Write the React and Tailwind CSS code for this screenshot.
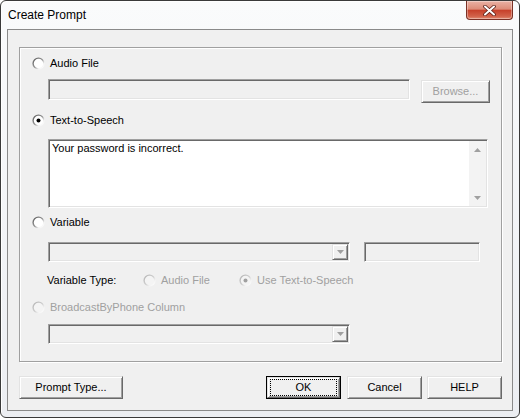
import React from "react";

const sunken =
  "border border-t-[#a0a0a0] border-l-[#a0a0a0] border-r-white border-b-white shadow-[inset_1px_1px_0_#696969,inset_-1px_-1px_0_#e3e3e3]";
const raised =
  "border border-t-[#e3e3e3] border-l-[#e3e3e3] border-r-[#696969] border-b-[#696969] shadow-[inset_1px_1px_0_#ffffff,inset_-1px_-1px_0_#a0a0a0]";

function Radio({ checked, disabled }) {
  const gid = disabled ? "rg-dis" : "rg-en";
  return (
    <svg width="13" height="13" viewBox="0 0 13 13" className="shrink-0 block">
      <defs>
        <linearGradient id={gid} x1="0" y1="0" x2="1" y2="1">
          <stop offset="0" stopColor={disabled ? "#b4b4b4" : "#5c5c5c"} />
          <stop offset="0.5" stopColor={disabled ? "#d0d0d0" : "#9a9a9a"} />
          <stop offset="0.75" stopColor="#f4f4f4" />
          <stop offset="1" stopColor="#ffffff" />
        </linearGradient>
      </defs>
      <circle
        cx="6.5"
        cy="6.5"
        r="5.4"
        fill={disabled ? "#f4f4f4" : "#ffffff"}
        stroke={`url(#${gid})`}
        strokeWidth="1.4"
      />
      {checked && (
        <circle cx="6.5" cy="6.5" r="2" fill={disabled ? "#a0a0a0" : "#000000"} />
      )}
    </svg>
  );
}

function DownArrow({ color = "#a0a0a0" }) {
  return (
    <svg width="7" height="4" viewBox="0 0 7 4" className="block">
      <path d="M0 0 H7 L3.5 4 Z" fill={color} />
    </svg>
  );
}

function UpArrow({ color = "#a0a0a0" }) {
  return (
    <svg width="7" height="4" viewBox="0 0 7 4" className="block">
      <path d="M0 4 H7 L3.5 0 Z" fill={color} />
    </svg>
  );
}

function Combo() {
  return (
    <div className={`w-[302px] h-[20px] bg-[#f0f0f0] p-[1px] flex justify-end ${sunken}`}>
      <div className={`w-[16px] h-full bg-[#f0f0f0] flex items-center justify-center ${raised}`}>
        <DownArrow />
      </div>
    </div>
  );
}

function Button({ children, w = "w-[75px]", extra = "" }) {
  return (
    <div
      className={`${w} h-[23px] bg-[#f0f0f0] flex items-center justify-center ${raised} ${extra}`}
    >
      {children}
    </div>
  );
}

export default function App() {
  return (
    <div className="w-[520px] h-[418px] bg-white">
      <div className="w-[520px] h-[418px] flex flex-col border border-[#3a3a3a] rounded-[6px] bg-gradient-to-b from-[#fafbfc] to-[#eceef2] font-['Liberation_Sans',Arial,sans-serif] text-[11px] text-black overflow-hidden shadow-[inset_1px_1px_0_#ffffff]">
        {/* Title bar */}
        <div className="h-[28px] shrink-0 flex justify-between items-start">
          <div className="pl-[7px] h-[28px] flex items-center text-[12px] leading-none">
            Create Prompt
          </div>
          <div className="mr-[6px] w-[47px] h-[19px] rounded-b-[4px] border border-[#7a3126] border-t-0 bg-[linear-gradient(to_bottom,#eab2a5_0%,#dd8c78_45%,#c7412b_52%,#d2624a_85%,#e28d74_100%)] flex items-center justify-center shadow-[inset_0_0_0_1px_rgba(255,255,255,0.35)]">
            <svg width="13" height="11" viewBox="0 0 13 11" className="block">
              <path d="M2 1.5 L11 9.5 M11 1.5 L2 9.5" stroke="#5a1f17" strokeWidth="3.6" strokeLinecap="round" />
              <path d="M2 1.5 L11 9.5 M11 1.5 L2 9.5" stroke="#ffffff" strokeWidth="2" strokeLinecap="round" />
            </svg>
          </div>
        </div>

        {/* Client area */}
        <div className="mx-[6px] h-[382px] shrink-0 border border-[#8a8a8a] bg-[#f0f0f0] flex flex-col pl-[11px] pt-[17px]">
          {/* Group box */}
          <div className="w-[483px] h-[315px] shrink-0 border border-[#a0a0a0] shadow-[inset_1px_1px_0_#ffffff,1px_1px_0_#ffffff] flex flex-col pl-[12px]">
            {/* Audio File */}
            <div className="mt-[7px] h-[16px] flex items-center gap-[5px]">
              <Radio />
              <span className="leading-none">Audio File</span>
            </div>
            <div className="mt-[8px] ml-[16px] flex items-start">
              <div className={`w-[362px] h-[21px] bg-[#f0f0f0] ${sunken}`} />
              <Button w="w-[69px]" extra="ml-[11px] mt-[1px] text-[#a0a0a0]">
                Browse...
              </Button>
            </div>

            {/* Text-to-Speech */}
            <div className="mt-[9px] h-[16px] flex items-center gap-[5px]">
              <Radio checked />
              <span className="leading-none">Text-to-Speech</span>
            </div>
            <div className={`mt-[11px] ml-[16px] w-[440px] h-[69px] bg-white p-[1px] flex ${sunken}`}>
              <div className="flex-1 pl-[2px] pt-[1px] leading-[13px]">
                Your password is incorrect.
              </div>
              <div className="w-[17px] h-full bg-[#f3f3f3] flex flex-col justify-between">
                <div className="h-[17px] flex items-center justify-center">
                  <UpArrow />
                </div>
                <div className="h-[17px] flex items-center justify-center">
                  <DownArrow />
                </div>
              </div>
            </div>

            {/* Variable */}
            <div className="mt-[6px] h-[16px] flex items-center gap-[5px]">
              <Radio />
              <span className="leading-none">Variable</span>
            </div>
            <div className="mt-[12px] ml-[16px] flex items-start">
              <Combo />
              <div className={`ml-[14px] w-[116px] h-[20px] bg-[#f0f0f0] ${sunken}`} />
            </div>

            {/* Variable type */}
            <div className="mt-[10px] h-[16px] flex items-center">
              <span className="ml-[15px] w-[96px] leading-none">Variable Type:</span>
              <div className="w-[96px] flex items-center gap-[5px] text-[#a0a0a0]">
                <Radio disabled />
                <span className="leading-none">Audio File</span>
              </div>
              <div className="flex items-center gap-[5px] text-[#a0a0a0]">
                <Radio disabled checked />
                <span className="leading-none">Use Text-to-Speech</span>
              </div>
            </div>

            {/* BroadcastByPhone Column */}
            <div className="mt-[11px] h-[16px] flex items-center gap-[5px] text-[#a0a0a0]">
              <Radio disabled />
              <span className="leading-none">BroadcastByPhone Column</span>
            </div>
            <div className="mt-[9px] ml-[16px] flex">
              <Combo />
            </div>
          </div>

          {/* Buttons */}
          <div className="mt-[14px] w-[483px] h-[23px] flex justify-between">
            <Button w="w-[104px]">Prompt Type...</Button>
            <div className="flex">
              <div className="w-[75px] h-[23px] border border-black">
                <div className={`w-full h-full bg-[#f0f0f0] px-[2px] py-[1px] ${raised}`}>
                  <div className="w-full h-full border border-dotted border-black flex items-center justify-center">
                    OK
                  </div>
                </div>
              </div>
              <Button extra="ml-[6px]">Cancel</Button>
              <Button extra="ml-[5px]">HELP</Button>
            </div>
          </div>
        </div>
      </div>
    </div>
  );
}
